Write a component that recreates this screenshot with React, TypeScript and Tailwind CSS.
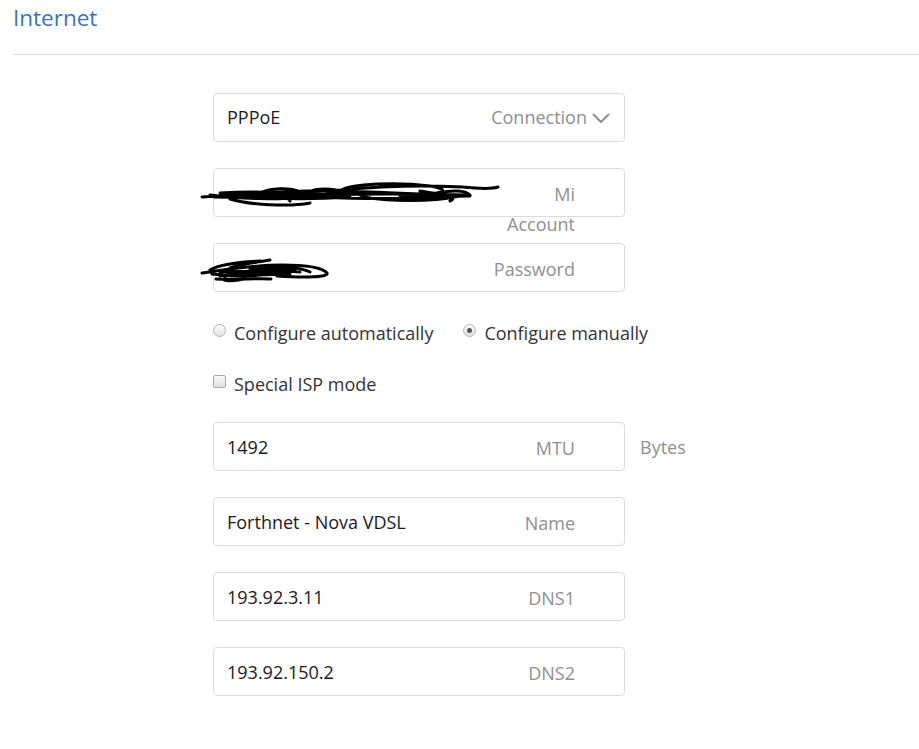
import type { ReactNode } from 'react';

function Field({ value, label, children }: { value?: string; label: string; children?: ReactNode }) {
  return (
    <div className="relative h-[49px] w-[412px] rounded-[4px] border border-[#dcdcdc] bg-white">
      {value && (
        <span className="absolute left-[13px] top-[11px] text-[18px] leading-[26px] text-[#1a1a1a]">{value}</span>
      )}
      {children}
      <span className="absolute right-[49px] top-[10px] w-[90px] text-right text-[18px] leading-[30px] text-[#909090]">
        {label}
      </span>
    </div>
  );
}

function Scribble({ width, d }: { width: number; d: string }) {
  return (
    <svg className="absolute left-[-14px] top-[4px]" width={width} height={42} viewBox={`0 0 ${width} 42`} fill="none">
      <path d={d} stroke="#000" strokeWidth="3" strokeLinecap="round" strokeLinejoin="round" />
    </svg>
  );
}

export default function App() {
  return (
    <div className="min-h-[749px] bg-white" style={{ fontFamily: '"Open Sans", "Noto Sans", sans-serif' }}>
      <div className="pl-[13px] pt-[3px]">
        <h1 className="text-[22.5px] leading-[30px] text-[#3b74bb]">Internet</h1>
        <div className="mt-[21px] h-px bg-[#d9d9d9]" />
      </div>

      <div className="ml-[213px] mt-[38px] flex flex-col">
        {/* connection type */}
        <div className="relative flex h-[49px] w-[412px] items-center rounded-[4px] border border-[#dcdcdc] px-[13px]">
          <span className="text-[18px] text-[#1a1a1a]">PPPoE</span>
          <span className="ml-auto text-[18px] text-[#909090]">Connection</span>
          <svg className="ml-[4px]" width="20" height="12" viewBox="0 0 20 12" fill="none">
            <path d="M2 2l8 8 8-8" stroke="#909090" strokeWidth="2" />
          </svg>
        </div>

        <div className="mt-[26px]">
          <Field label="Mi Account">
            <Scribble
              width={300}
              d="M2 24c40-3 90-6 140-7 20-2 60-6 120-3 20 2 30 2 36 0 M10 22c30 4 70 5 90 2 20-3 40-6 70-5 40 1 70 4 95 3 M30 26c20 6 60 8 80 4 M60 20c10-5 30-6 40-1 M90 28c-10-8 20-10 40-6 M140 18c10-8 60-9 90-5 25 4 10 9-20 8 M160 22c10 5 50 8 80 2 M220 18c20 3 40 6 30 10 M20 20c30-2 60-1 90 1 M120 24c40 2 90 3 140-2 M40 23c20 2 40 3 60 1 M180 26c20 2 50 3 80-3 M14 24c40 1 80 0 120-2 40-2 80-1 130 0 M50 21c30 1 60 2 90 0 M150 21c30-1 60 0 100 1 M70 25c20 1 50 1 80-1 M200 23c20 0 40 1 70 0 M110 19c5-4 25-4 30 0 M240 20c10-3 25-3 30 2"
            />
          </Field>
        </div>

        <div className="mt-[26px]">
          <Field label="Password">
            <Scribble
              width={140}
              d="M2 25c20-3 50-8 80-8 20 0 40 2 45 8 2 4-20 5-50 3 M10 22c10-6 30-8 50-9 M20 28c10-3 40-3 60-4 M16 31c20 1 40-1 55 0 M30 20c10-4 30-6 40-8 M12 26c15 2 30 3 50 1 M40 24c20-2 40-2 60 0 M25 30c-5 4 10 3 20 1 M60 18c15 0 40 1 50 6 M20 24c20-1 40-1 70 0 M30 27c20 0 40 0 60-1 M50 21c15-1 30-1 45 1 M24 23c10 1 20 2 30 1"
            />
          </Field>
        </div>

        {/* radios */}
        <div className="mt-[26px] flex h-[30px] items-center text-[18px] text-[#333]">
          <span className="mr-[8px] mt-[-6px] h-[13px] w-[13px] rounded-full border border-[#b4b4b4] bg-gradient-to-b from-[#fafafa] to-[#e2e2e2]" />
          <span>Configure automatically</span>
          <span className="ml-[30px] mr-[8px] mt-[-6px] flex h-[13px] w-[13px] items-center justify-center rounded-full border border-[#b4b4b4] bg-gradient-to-b from-[#fafafa] to-[#e2e2e2]">
            <span className="h-[5px] w-[5px] rounded-full bg-[#555]" />
          </span>
          <span>Configure manually</span>
        </div>

        {/* checkbox */}
        <div className="mt-[21px] flex h-[30px] items-center text-[18px] text-[#333]">
          <span className="mr-[8px] mt-[-5px] h-[13px] w-[13px] rounded-[2px] border border-[#a8a8a8] bg-gradient-to-b from-[#fafafa] to-[#e0e0e0]" />
          <span>Special ISP mode</span>
        </div>

        <div className="mt-[23px] flex items-center">
          <Field value="1492" label="MTU" />
          <span className="ml-[15px] mt-[2px] text-[18px] text-[#909090]">Bytes</span>
        </div>

        <div className="mt-[26px]">
          <Field value="Forthnet - Nova VDSL" label="Name" />
        </div>
        <div className="mt-[26px]">
          <Field value="193.92.3.11" label="DNS1" />
        </div>
        <div className="mt-[26px]">
          <Field value="193.92.150.2" label="DNS2" />
        </div>
      </div>
    </div>
  );
}
